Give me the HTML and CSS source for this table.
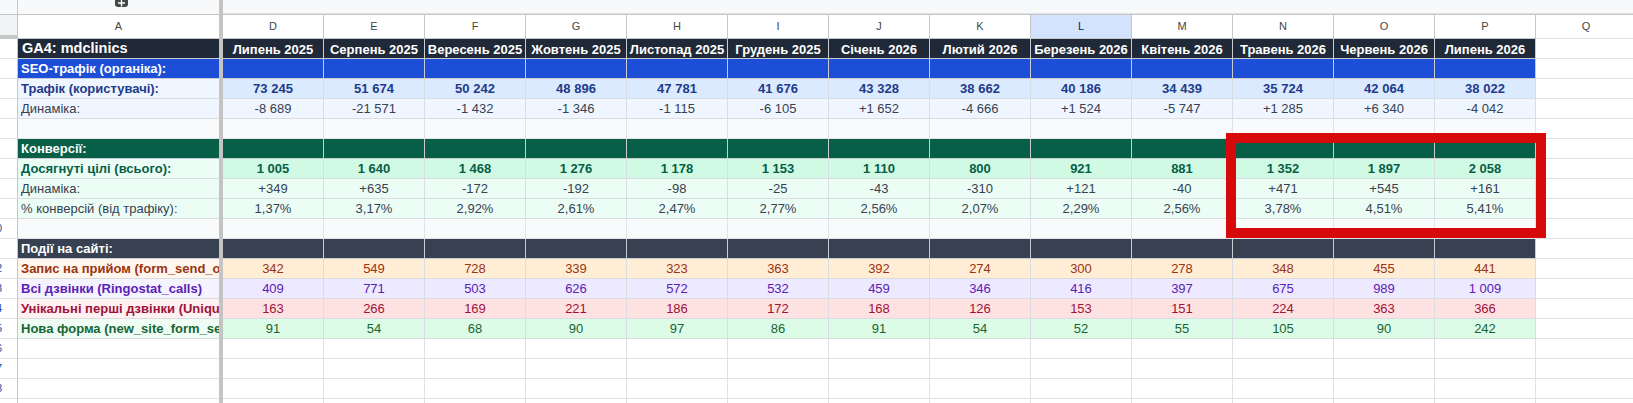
FILE: index.html
```html
<!DOCTYPE html>
<html lang="uk">
<head>
<meta charset="utf-8">
<title>GA4: mdclinics</title>
<link rel="stylesheet" href="styles.css">
</head>
<body>
<div class="sheet">
  <div class="topbar">
    <div class="rh"></div>
    <div class="ca"><span class="addbtn"><svg width="13" height="13" viewBox="0 0 13 13"><rect x="0" y="0" width="13" height="13" rx="3" fill="#444746"/><path d="M6.5 5.5v7M3 9h7" stroke="#fff" stroke-width="1.4"/></svg></span></div>
    <div class="dv"></div>
    <div class="rest"></div>
  </div>

  <div class="row colhead">
    <div class="rh corner"></div>
    <div class="ca">A</div>
    <div class="dv"></div>
    <div class="c">D</div><div class="c">E</div><div class="c">F</div><div class="c">G</div><div class="c">H</div><div class="c">I</div><div class="c">J</div><div class="c">K</div><div class="c sel">L</div><div class="c">M</div><div class="c">N</div><div class="c">O</div><div class="c">P</div><div class="c q">Q</div>
    <div class="rest"></div>
  </div>

  <div class="row r-head">
    <div class="rh"></div>
    <div class="ca title">GA4: mdclinics</div>
    <div class="dv"></div>
    <div class="c">Липень 2025</div><div class="c">Серпень 2025</div><div class="c">Вересень 2025</div><div class="c">Жовтень 2025</div><div class="c">Листопад 2025</div><div class="c">Грудень 2025</div><div class="c">Січень 2026</div><div class="c">Лютий 2026</div><div class="c">Березень 2026</div><div class="c">Квітень 2026</div><div class="c">Травень 2026</div><div class="c">Червень 2026</div><div class="c">Липень 2026</div><div class="c q"></div>
    <div class="rest"></div>
  </div>

  <div class="row r-seo">
    <div class="rh"></div>
    <div class="ca">SEO-трафік (органіка):</div>
    <div class="dv"></div>
    <div class="c"></div><div class="c"></div><div class="c"></div><div class="c"></div><div class="c"></div><div class="c"></div><div class="c"></div><div class="c"></div><div class="c"></div><div class="c"></div><div class="c"></div><div class="c"></div><div class="c"></div><div class="c q"></div>
    <div class="rest"></div>
  </div>

  <div class="row r-traf">
    <div class="rh"></div>
    <div class="ca">Трафік (користувачі):</div>
    <div class="dv"></div>
    <div class="c">73 245</div><div class="c">51 674</div><div class="c">50 242</div><div class="c">48 896</div><div class="c">47 781</div><div class="c">41 676</div><div class="c">43 328</div><div class="c">38 662</div><div class="c">40 186</div><div class="c">34 439</div><div class="c">35 724</div><div class="c">42 064</div><div class="c">38 022</div><div class="c q"></div>
    <div class="rest"></div>
  </div>

  <div class="row r-tdyn">
    <div class="rh"></div>
    <div class="ca">Динаміка:</div>
    <div class="dv"></div>
    <div class="c">-8 689</div><div class="c">-21 571</div><div class="c">-1 432</div><div class="c">-1 346</div><div class="c">-1 115</div><div class="c">-6 105</div><div class="c">+1 652</div><div class="c">-4 666</div><div class="c">+1 524</div><div class="c">-5 747</div><div class="c">+1 285</div><div class="c">+6 340</div><div class="c">-4 042</div><div class="c q"></div>
    <div class="rest"></div>
  </div>

  <div class="row r-gap">
    <div class="rh"></div>
    <div class="ca"></div>
    <div class="dv"></div>
    <div class="c"></div><div class="c"></div><div class="c"></div><div class="c"></div><div class="c"></div><div class="c"></div><div class="c"></div><div class="c"></div><div class="c"></div><div class="c"></div><div class="c"></div><div class="c"></div><div class="c"></div><div class="c q"></div>
    <div class="rest"></div>
  </div>

  <div class="row r-convh">
    <div class="rh"></div>
    <div class="ca">Конверсії:</div>
    <div class="dv"></div>
    <div class="c"></div><div class="c"></div><div class="c"></div><div class="c"></div><div class="c"></div><div class="c"></div><div class="c"></div><div class="c"></div><div class="c"></div><div class="c"></div><div class="c"></div><div class="c"></div><div class="c"></div><div class="c q"></div>
    <div class="rest"></div>
  </div>

  <div class="row r-conv">
    <div class="rh"></div>
    <div class="ca">Досягнуті цілі (всього):</div>
    <div class="dv"></div>
    <div class="c">1 005</div><div class="c">1 640</div><div class="c">1 468</div><div class="c">1 276</div><div class="c">1 178</div><div class="c">1 153</div><div class="c">1 110</div><div class="c">800</div><div class="c">921</div><div class="c">881</div><div class="c">1 352</div><div class="c">1 897</div><div class="c">2 058</div><div class="c q"></div>
    <div class="rest"></div>
  </div>

  <div class="row r-cdyn">
    <div class="rh"></div>
    <div class="ca">Динаміка:</div>
    <div class="dv"></div>
    <div class="c">+349</div><div class="c">+635</div><div class="c">-172</div><div class="c">-192</div><div class="c">-98</div><div class="c">-25</div><div class="c">-43</div><div class="c">-310</div><div class="c">+121</div><div class="c">-40</div><div class="c">+471</div><div class="c">+545</div><div class="c">+161</div><div class="c q"></div>
    <div class="rest"></div>
  </div>

  <div class="row r-cdyn">
    <div class="rh"></div>
    <div class="ca">% конверсій (від трафіку):</div>
    <div class="dv"></div>
    <div class="c">1,37%</div><div class="c">3,17%</div><div class="c">2,92%</div><div class="c">2,61%</div><div class="c">2,47%</div><div class="c">2,77%</div><div class="c">2,56%</div><div class="c">2,07%</div><div class="c">2,29%</div><div class="c">2,56%</div><div class="c">3,78%</div><div class="c">4,51%</div><div class="c">5,41%</div><div class="c q"></div>
    <div class="rest"></div>
  </div>

  <div class="row r-gap">
    <div class="rh"><span>10</span></div>
    <div class="ca"></div>
    <div class="dv"></div>
    <div class="c"></div><div class="c"></div><div class="c"></div><div class="c"></div><div class="c"></div><div class="c"></div><div class="c"></div><div class="c"></div><div class="c"></div><div class="c"></div><div class="c"></div><div class="c"></div><div class="c"></div><div class="c q"></div>
    <div class="rest"></div>
  </div>

  <div class="row r-evh">
    <div class="rh"></div>
    <div class="ca">Події на сайті:</div>
    <div class="dv"></div>
    <div class="c"></div><div class="c"></div><div class="c"></div><div class="c"></div><div class="c"></div><div class="c"></div><div class="c"></div><div class="c"></div><div class="c"></div><div class="c"></div><div class="c"></div><div class="c"></div><div class="c"></div><div class="c q"></div>
    <div class="rest"></div>
  </div>

  <div class="row r-ev1">
    <div class="rh"><span>12</span></div>
    <div class="ca">Запис на прийом (form_send_ok)</div>
    <div class="dv"></div>
    <div class="c">342</div><div class="c">549</div><div class="c">728</div><div class="c">339</div><div class="c">323</div><div class="c">363</div><div class="c">392</div><div class="c">274</div><div class="c">300</div><div class="c">278</div><div class="c">348</div><div class="c">455</div><div class="c">441</div><div class="c q"></div>
    <div class="rest"></div>
  </div>

  <div class="row r-ev2">
    <div class="rh"><span>13</span></div>
    <div class="ca">Всі дзвінки (Ringostat_calls)</div>
    <div class="dv"></div>
    <div class="c">409</div><div class="c">771</div><div class="c">503</div><div class="c">626</div><div class="c">572</div><div class="c">532</div><div class="c">459</div><div class="c">346</div><div class="c">416</div><div class="c">397</div><div class="c">675</div><div class="c">989</div><div class="c">1 009</div><div class="c q"></div>
    <div class="rest"></div>
  </div>

  <div class="row r-ev3">
    <div class="rh"><span>14</span></div>
    <div class="ca">Унікальні перші дзвінки (Unique_calls)</div>
    <div class="dv"></div>
    <div class="c">163</div><div class="c">266</div><div class="c">169</div><div class="c">221</div><div class="c">186</div><div class="c">172</div><div class="c">168</div><div class="c">126</div><div class="c">153</div><div class="c">151</div><div class="c">224</div><div class="c">363</div><div class="c">366</div><div class="c q"></div>
    <div class="rest"></div>
  </div>

  <div class="row r-ev4">
    <div class="rh"><span>15</span></div>
    <div class="ca">Нова форма (new_site_form_send)</div>
    <div class="dv"></div>
    <div class="c">91</div><div class="c">54</div><div class="c">68</div><div class="c">90</div><div class="c">97</div><div class="c">86</div><div class="c">91</div><div class="c">54</div><div class="c">52</div><div class="c">55</div><div class="c">105</div><div class="c">90</div><div class="c">242</div><div class="c q"></div>
    <div class="rest"></div>
  </div>

  <div class="row r-empty">
    <div class="rh"><span>16</span></div>
    <div class="ca"></div>
    <div class="dv"></div>
    <div class="c"></div><div class="c"></div><div class="c"></div><div class="c"></div><div class="c"></div><div class="c"></div><div class="c"></div><div class="c"></div><div class="c"></div><div class="c"></div><div class="c"></div><div class="c"></div><div class="c"></div><div class="c q"></div>
    <div class="rest"></div>
  </div>

  <div class="row r-empty">
    <div class="rh"><span>17</span></div>
    <div class="ca"></div>
    <div class="dv"></div>
    <div class="c"></div><div class="c"></div><div class="c"></div><div class="c"></div><div class="c"></div><div class="c"></div><div class="c"></div><div class="c"></div><div class="c"></div><div class="c"></div><div class="c"></div><div class="c"></div><div class="c"></div><div class="c q"></div>
    <div class="rest"></div>
  </div>

  <div class="row r-empty">
    <div class="rh"><span>18</span></div>
    <div class="ca"></div>
    <div class="dv"></div>
    <div class="c"></div><div class="c"></div><div class="c"></div><div class="c"></div><div class="c"></div><div class="c"></div><div class="c"></div><div class="c"></div><div class="c"></div><div class="c"></div><div class="c"></div><div class="c"></div><div class="c"></div><div class="c q"></div>
    <div class="rest"></div>
  </div>

  <div class="row r-empty">
    <div class="rh"></div>
    <div class="ca"></div>
    <div class="dv"></div>
    <div class="c"></div><div class="c"></div><div class="c"></div><div class="c"></div><div class="c"></div><div class="c"></div><div class="c"></div><div class="c"></div><div class="c"></div><div class="c"></div><div class="c"></div><div class="c"></div><div class="c"></div><div class="c q"></div>
    <div class="rest"></div>
  </div>
</div>
<div class="highlight"></div>
</body>
</html>
```

FILE: styles.css
```css
* { box-sizing: border-box; }

html, body {
  margin: 0;
  padding: 0;
}

body {
  width: 1633px;
  height: 403px;
  overflow: hidden;
  position: relative;
  background: #ffffff;
  font-family: "Liberation Sans", Arial, sans-serif;
  font-size: 13px;
  color: #222;
}

.sheet {
  display: flex;
  flex-direction: column;
}

.topbar {
  display: flex;
  height: 15px;
  background: #f8f9fa;
  border-bottom: 1px solid #c7c7c7;
}

.topbar .rh {
  border-bottom: none;
  background: transparent;
}

.topbar .ca {
  display: flex;
  justify-content: center;
  align-items: flex-start;
  background: transparent;
  border-bottom: none;
  overflow: visible;
}

.addbtn {
  display: block;
  width: 13px;
  height: 7px;
  overflow: hidden;
  position: relative;
  left: 1px;
}

.addbtn svg {
  display: block;
  margin-top: -6px;
}

.row {
  display: flex;
  height: 20px;
}

.rh {
  flex: 0 0 18px;
  width: 18px;
  border-right: 1px solid #c4c7c5;
  border-bottom: 1px solid #e1e1e1;
  overflow: hidden;
  background: #ffffff;
  font-size: 11px;
  color: #2f4a9e;
}

.rh span {
  display: block;
  width: 46px;
  margin-left: -27px;
  text-align: center;
  line-height: 19px;
}

.ca {
  flex: 0 0 201px;
  width: 201px;
  padding-left: 3px;
  border-bottom: 1px solid #d9dce1;
  white-space: nowrap;
  overflow: hidden;
  line-height: 19px;
}

.dv {
  flex: 0 0 4px;
  width: 4px;
  background: #c4c4c4;
}

.c {
  flex: 0 0 101px;
  width: 101px;
  border-right: 1px solid #d9dce1;
  border-bottom: 1px solid #d9dce1;
  text-align: center;
  white-space: nowrap;
  overflow: hidden;
  line-height: 19px;
}

.c.q {
  background: #ffffff !important;
  border-color: #e1e1e1 !important;
}

.rest {
  flex: 1 1 auto;
  border-bottom: 1px solid #e1e1e1;
}

/* column header row */
.colhead {
  height: 24px;
}

.colhead .rh.corner {
  background: #f1f3f4;
  border-bottom: 4px solid #c4c7c5;
}

.colhead .ca,
.colhead .c {
  text-align: center;
  font-size: 11px;
  color: #444746;
  line-height: 23px;
  background: #ffffff;
  border-bottom: 1px solid #c4c7c5;
  border-right: 1px solid #c4c7c5;
  padding-left: 0;
}

.colhead .ca {
  border-right: none;
}

.colhead .c.sel {
  background: #d3e3fd;
  color: #0b1f44;
}

.colhead .rest {
  border-bottom: 1px solid #c4c7c5;
}

/* dark title row */
.r-head .ca,
.r-head .c {
  background: #1f2937;
  color: #ffffff;
  font-weight: bold;
  border-color: #c9cdd3;
}

.r-head .ca.title {
  font-size: 14.5px;
  padding-left: 4px;
}

.r-head .c {
  padding-top: 1px;
}

/* SEO header */
.r-seo .ca,
.r-seo .c {
  background: #1d4ed8;
  color: #ffffff;
  font-weight: bold;
  border-color: #c9cdd3;
}

/* traffic */
.r-traf .ca {
  background: #eff6ff;
  color: #1e3a8a;
  font-weight: bold;
}

.r-traf .c {
  background: #dbeafe;
  color: #1e3a8a;
  font-weight: bold;
}

.r-tdyn .ca,
.r-tdyn .c {
  background: #eff6ff;
  color: #374151;
}

/* gap rows */
.r-gap .ca,
.r-gap .c {
  background: #f8fafc;
  border-color: #e1e3e6;
}

/* conversions */
.r-convh .ca,
.r-convh .c {
  background: #065f46;
  color: #ffffff;
  font-weight: bold;
  border-color: #c9cdd3;
}

.r-conv .ca {
  background: #ecfdf5;
  color: #065f46;
  font-weight: bold;
}

.r-conv .c {
  background: #d1fae5;
  color: #065f46;
  font-weight: bold;
}

.r-cdyn .ca,
.r-cdyn .c {
  background: #ecfdf5;
  color: #374151;
}

/* events */
.r-evh .ca,
.r-evh .c {
  background: #374151;
  color: #ffffff;
  font-weight: bold;
  border-color: #c9cdd3;
}

.r-ev1 .ca { background: #fff7ed; color: #9a3412; font-weight: bold; }
.r-ev1 .c  { background: #ffedd5; color: #9a3412; }

.r-ev2 .ca { background: #f5f3ff; color: #5b21b6; font-weight: bold; }
.r-ev2 .c  { background: #ede9fe; color: #5b21b6; }

.r-ev3 .ca { background: #fff1f2; color: #9f1239; font-weight: bold; }
.r-ev3 .c  { background: #fee2e2; color: #9f1239; }

.r-ev4 .ca { background: #f0fdf4; color: #166534; font-weight: bold; }
.r-ev4 .c  { background: #dcfce7; color: #166534; }

/* empty rows */
.r-empty .ca,
.r-empty .c {
  background: #ffffff;
  border-color: #e1e1e1;
}

/* red annotation frame */
.highlight {
  position: absolute;
  left: 1226px;
  top: 133px;
  width: 320px;
  height: 105px;
  border: 10px solid #d60a0a;
  pointer-events: none;
}
```
